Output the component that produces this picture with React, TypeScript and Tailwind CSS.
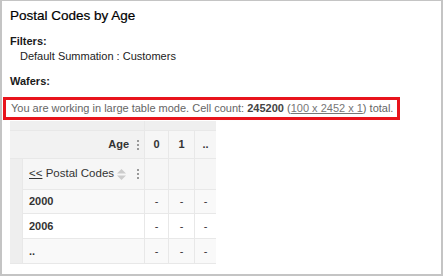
import React from 'react';

// three stacked dots used as a column menu handle
function Kebab() {
  return (
    <div className="flex flex-col gap-[2px]">
      <span className="block h-[2px] w-[2px] bg-[#9a9a9a]" />
      <span className="block h-[2px] w-[2px] bg-[#9a9a9a]" />
      <span className="block h-[2px] w-[2px] bg-[#9a9a9a]" />
    </div>
  );
}

function SortIcon() {
  return (
    <svg width="9" height="11" viewBox="0 0 9 11" className="block">
      <polygon points="4.5,0 9,4.5 0,4.5" fill="#cccccc" />
      <polygon points="0,6.5 9,6.5 4.5,11" fill="#cccccc" />
    </svg>
  );
}

const rows = [
  { label: '2000', bg: 'bg-[#f9f9f9]' },
  { label: '2006', bg: 'bg-white' },
  { label: '..', bg: 'bg-[#f9f9f9]' },
];

export default function App() {
  return (
    <div className="w-[443px] h-[276px] bg-white border-[#c4c4c4] border-t border-l-2 border-r-2 border-b-2 pl-[8px] pt-[6px] font-['Liberation_Sans',Arial,sans-serif] text-[#1a1a1a]">
      <div className="text-[13.5px] leading-[18px] text-black [-webkit-text-stroke:0.2px_black]">Postal Codes by Age</div>

      <div className="mt-[9px] text-[11px] leading-[15px] font-bold">Filters:</div>
      <div className="pl-[10px] text-[11px] leading-[15px] text-[#222]">Default Summation : Customers</div>

      <div className="mt-[10px] text-[11px] leading-[15px] font-bold">Wafers:</div>

      <div className="mt-[8px] -ml-[7px] inline-block border-[3px] border-[#e8141c] pl-[5px] pr-[4px] text-[11px] leading-[17px] text-[#666] whitespace-nowrap">
        You are working in large table mode. Cell count: <span className="font-bold text-[#444]">245200</span> (
        <span className="underline text-[#777]">100 x 2452 x 1</span>) total.
      </div>

      <div className="mt-px grid w-max gap-px bg-[#e8e8e8] pb-px grid-cols-[12px_121px_23px_25px_21px] grid-rows-[9px_27px_30px_23px_24px_24px] text-[11px] text-[#333]">
        {/* top band */}
        <div className="col-span-2 bg-[#efefef]" />
        <div className="col-span-3 bg-[#efefef]" />

        {/* column header row */}
        <div className="col-span-2 flex items-center justify-end gap-[8px] bg-[#f2f2f2] pr-[5px]">
          <span className="font-bold">Age</span>
          <Kebab />
        </div>
        <div className="flex items-center justify-center bg-[#f6f6f6] font-bold">0</div>
        <div className="flex items-center justify-center bg-[#f6f6f6] font-bold">1</div>
        <div className="flex items-center justify-center bg-[#f6f6f6] font-bold">..</div>

        {/* row header row */}
        <div className="row-span-4 bg-[#eeeeee]" />
        <div className="flex items-center bg-[#f6f6f6] pl-[6px] pr-[5px]">
          <span className="text-[11.5px]">
            <span className="underline">&lt;&lt;</span> Postal Codes
          </span>
          <span className="ml-[3px]">
            <SortIcon />
          </span>
          <span className="ml-auto">
            <Kebab />
          </span>
        </div>
        <div className="bg-[#f6f6f6]" />
        <div className="bg-[#f6f6f6]" />
        <div className="bg-[#f6f6f6]" />

        {rows.map((r) => (
          <React.Fragment key={r.label}>
            <div className={`flex items-center pl-[6px] font-bold ${r.bg}`}>{r.label}</div>
            <div className={`flex items-center justify-center ${r.bg}`}>-</div>
            <div className={`flex items-center justify-center ${r.bg}`}>-</div>
            <div className={`flex items-center justify-center ${r.bg}`}>-</div>
          </React.Fragment>
        ))}
      </div>
    </div>
  );
}
